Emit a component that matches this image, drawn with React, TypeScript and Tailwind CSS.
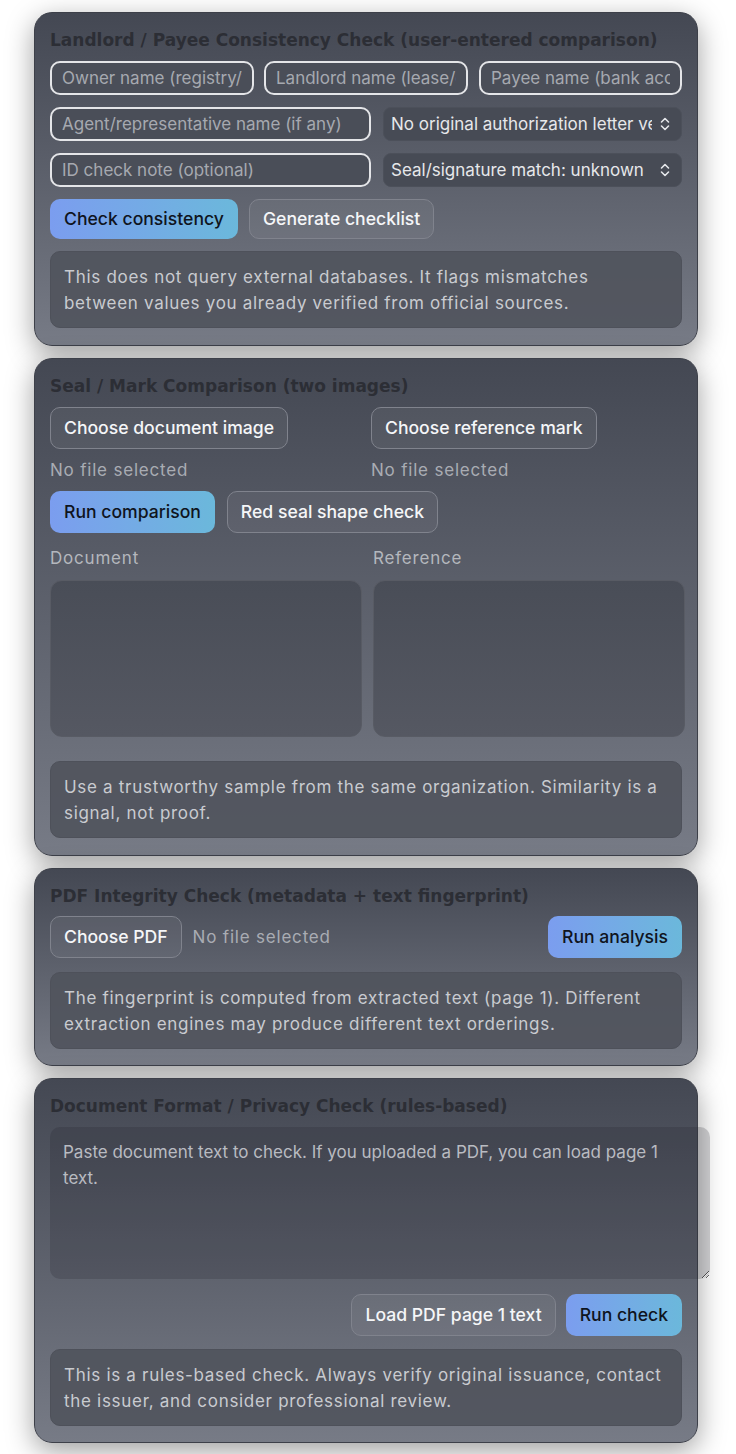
import React from "react";

const font = { fontFamily: "Inter, 'Noto Sans', sans-serif" };
const titleFont = { fontFamily: "'DejaVu Sans', Verdana, sans-serif" };

function ChevUpDown() {
  return (
    <svg width="12" height="16" viewBox="0 0 12 16" fill="none" stroke="#e5e7eb" strokeWidth="1.6" strokeLinecap="round" strokeLinejoin="round">
      <path d="M2.5 6 L6 2.5 L9.5 6" />
      <path d="M2.5 10 L6 13.5 L9.5 10" />
    </svg>
  );
}

function Card({ title, children, pb = "pb-[16px]" }: { title: string; children: React.ReactNode; pb?: string }) {
  return (
    <section
      className={
        "relative rounded-[18px] border border-[#3d4049] bg-gradient-to-b from-[#444853] to-[#777b86] px-[15px] pt-[15px] shadow-[0_8px_28px_rgba(0,0,0,0.38)] " +
        pb
      }
    >
      <h2 className="text-[17px] leading-6 font-bold text-[#2c2e35]" style={titleFont}>
        {title}
      </h2>
      {children}
    </section>
  );
}

function GradBtn({ children, h = "h-10" }: { children: React.ReactNode; h?: string }) {
  return (
    <button
      className={
        h +
        " shrink-0 rounded-[10px] bg-gradient-to-r from-[#7b9def] to-[#6bb8db] px-[14px] text-[17.6px] font-medium text-[#0f1420]"
      }
    >
      {children}
    </button>
  );
}

function GhostBtn({ children, h = "h-10" }: { children: React.ReactNode; h?: string }) {
  return (
    <button
      className={
        h +
        " shrink-0 rounded-[10px] border border-[#80838d] bg-white/[0.05] px-[13px] text-[17.6px] font-medium text-[#f5f6f8]"
      }
    >
      {children}
    </button>
  );
}

function Note({ children }: { children: React.ReactNode }) {
  return (
    <div className="rounded-[10px] border border-[#4e515a] bg-[#50535c]/90 px-[13px] pt-3 pb-[11px] text-[17px] leading-[26px] tracking-[0.7px] text-[#c9cbd0]">
      {children}
    </div>
  );
}

function TextInput({ placeholder, className = "" }: { placeholder: string; className?: string }) {
  return (
    <input
      placeholder={placeholder}
      className={
        "h-[34px] min-w-0 rounded-[10px] border-2 border-[#e4e5e8] bg-[#4a4e58] px-[10px] text-[17px] text-[#e5e7eb] placeholder:text-[#a6a9b0] outline-none " +
        className
      }
    />
  );
}

function Select({ value }: { value: string }) {
  return (
    <div className="relative h-[34px] flex-1 min-w-0 rounded-[8px] bg-[#474b55] border border-[#4c505a]">
      <div className="ml-[7px] mr-[29px] h-full overflow-hidden whitespace-nowrap text-[17px] leading-[32px] text-[#e6e7ea]">
        {value}
      </div>
      <div className="absolute right-[10px] top-[8px]">
        <ChevUpDown />
      </div>
    </div>
  );
}

const fileText = "text-[17px] leading-[22px] tracking-[0.8px] text-[#a9acb3]";

export default function App() {
  return (
    <div className="min-h-[1454px] bg-white" style={font}>
      <div className="ml-[34px] flex w-[664px] flex-col gap-3 pt-3 pb-3">
        <Card title="Landlord / Payee Consistency Check (user-entered comparison)" pb="pb-[17px]">
          <div className="mt-[9px] flex flex-col gap-3">
            <div className="grid grid-cols-3 gap-[10px]">
              <TextInput placeholder="Owner name (registry/title)" />
              <TextInput placeholder="Landlord name (lease/contract)" />
              <TextInput placeholder="Payee name (bank account)" className="ml-[1px]" />
            </div>
            <div className="flex gap-3">
              <TextInput placeholder="Agent/representative name (if any)" className="w-[321px]" />
              <Select value="No original authorization letter verified" />
            </div>
            <div className="flex gap-3">
              <TextInput placeholder="ID check note (optional)" className="w-[321px]" />
              <Select value="Seal/signature match: unknown" />
            </div>
            <div className="flex gap-[11px]">
              <GradBtn>Check consistency</GradBtn>
              <GhostBtn>Generate checklist</GhostBtn>
            </div>
            <Note>
              This does not query external databases. It flags mismatches between values you already verified from official sources.
            </Note>
          </div>
        </Card>

        <Card title="Seal / Mark Comparison (two images)" pb="pb-[17px]">
          <div className="mt-[9px] grid grid-cols-[311px_311px] gap-[10px]">
            <div className="flex flex-col items-start">
              <GhostBtn h="h-[42px]">Choose document image</GhostBtn>
              <div className={"mt-[10px] " + fileText}>No file selected</div>
            </div>
            <div className="flex flex-col items-start">
              <GhostBtn h="h-[42px]">Choose reference mark</GhostBtn>
              <div className={"mt-[10px] " + fileText}>No file selected</div>
            </div>
          </div>
          <div className="mt-[10px] flex gap-3">
            <GradBtn h="h-[42px]">Run comparison</GradBtn>
            <GhostBtn h="h-[42px]">Red seal shape check</GhostBtn>
          </div>
          <div className="mt-[14px] grid grid-cols-[312px_312px] gap-[11px]">
            <div>
              <div className="text-[17px] leading-[22px] tracking-[0.8px] text-[#b4b7bd]">Document</div>
              <div className="mt-[11px] h-[157px] rounded-[12px] border border-[#585b64] bg-gradient-to-b from-[#494d57] to-[#555862]" />
            </div>
            <div>
              <div className="text-[17px] leading-[22px] tracking-[0.8px] text-[#b4b7bd]">Reference</div>
              <div className="mt-[11px] h-[157px] rounded-[12px] border border-[#585b64] bg-gradient-to-b from-[#494d57] to-[#555862]" />
            </div>
          </div>
          <div className="mt-[24px]">
            <Note>Use a trustworthy sample from the same organization. Similarity is a signal, not proof.</Note>
          </div>
        </Card>

        <Card title="PDF Integrity Check (metadata + text fingerprint)">
          <div className="mt-[8px] flex items-center">
            <GhostBtn h="h-[42px]">Choose PDF</GhostBtn>
            <span className={"ml-[11px] " + fileText}>No file selected</span>
            <div className="flex-1" />
            <GradBtn h="h-[42px]">Run analysis</GradBtn>
          </div>
          <div className="mt-[14px]">
            <Note>
              The fingerprint is computed from extracted text (page 1). Different extraction engines may produce different text orderings.
            </Note>
          </div>
        </Card>

        <Card title="Document Format / Privacy Check (rules-based)">
          <textarea
            placeholder="Paste document text to check. If you uploaded a PDF, you can load page 1 text."
            className="mt-[9px] block h-[152px] w-[660px] rounded-[10px] bg-[rgba(28,30,40,0.2)] px-[13px] py-[12px] text-[17px] leading-[26px] text-[#e5e7eb] placeholder:text-[#b9bbc1] outline-none"
          />
          <div className="mt-[15px] flex justify-end gap-[10px]">
            <GhostBtn h="h-[42px]">Load PDF page 1 text</GhostBtn>
            <GradBtn h="h-[42px]">Run check</GradBtn>
          </div>
          <div className="mt-[13px]">
            <Note>
              This is a rules-based check. Always verify original issuance, contact the issuer, and consider professional review.
            </Note>
          </div>
        </Card>
      </div>
    </div>
  );
}
